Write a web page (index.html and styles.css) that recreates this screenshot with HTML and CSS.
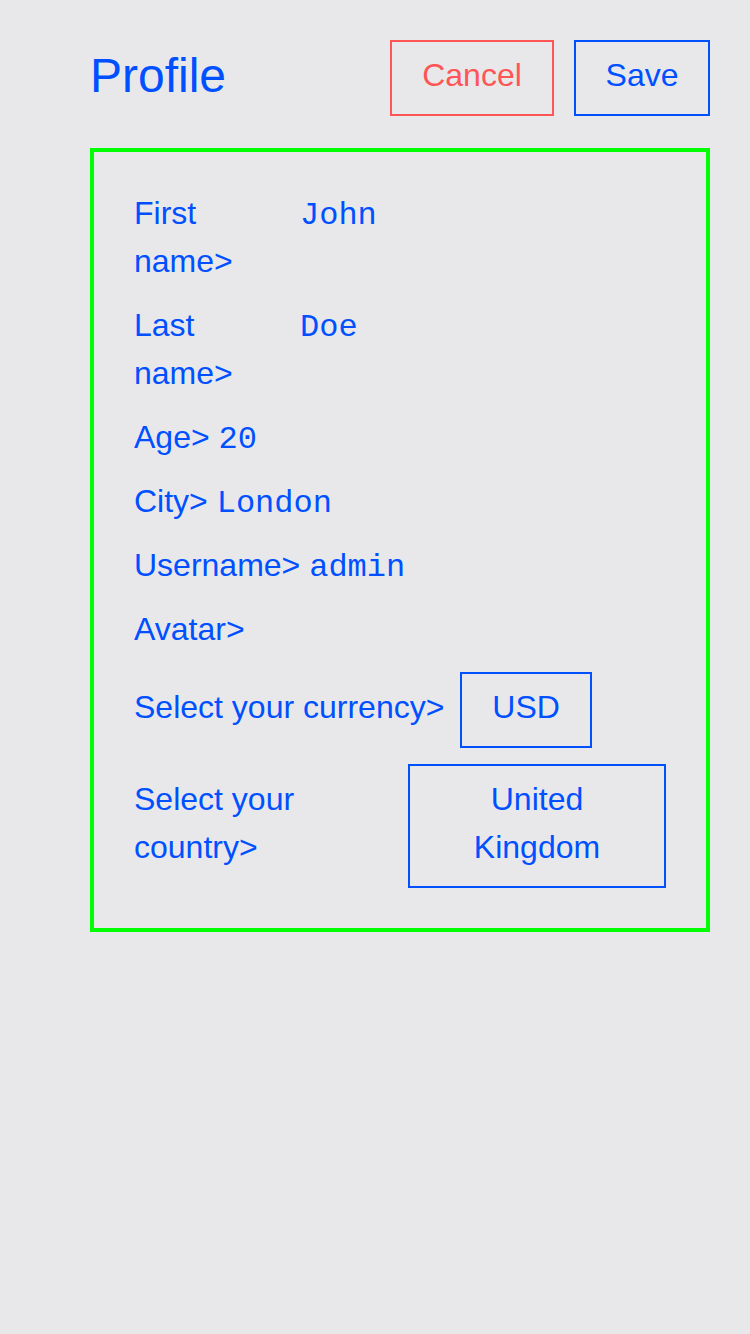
FILE: index.html
```html
<!DOCTYPE html>
<html lang="en">
<head>
<meta charset="utf-8">
<title>Profile</title>
<link rel="stylesheet" href="styles.css">
</head>
<body>
<div class="page">
  <header class="header">
    <h1 class="title">Profile</h1>
    <div class="actions">
      <button class="btn btn-cancel">Cancel</button>
      <button class="btn btn-save">Save</button>
    </div>
  </header>
  <section class="card">
    <div class="row row-split">
      <span class="label label-fixed">First name&gt;</span>
      <span class="value">John</span>
    </div>
    <div class="row row-split">
      <span class="label label-fixed">Last name&gt;</span>
      <span class="value">Doe</span>
    </div>
    <div class="row"><span class="label">Age&gt;</span> <span class="value">20</span></div>
    <div class="row"><span class="label">City&gt;</span> <span class="value">London</span></div>
    <div class="row"><span class="label">Username&gt;</span> <span class="value">admin</span></div>
    <div class="row"><span class="label">Avatar&gt;</span></div>
    <div class="row row-select row-currency">
      <span class="label">Select your currency&gt;</span>
      <div class="select">USD</div>
    </div>
    <div class="row row-select row-country">
      <span class="label label-half">Select your country&gt;</span>
      <div class="select select-half">United Kingdom</div>
    </div>
  </section>
</div>
</body>
</html>
```
FILE: styles.css
```css
html, body {
  margin: 0;
  padding: 0;
  background: #e8e8eb;
}
body {
  font-family: "Liberation Sans", Arial, sans-serif;
  color: #0050ff;
  width: 750px;
  min-height: 1334px;
}
.page {
  padding: 40px 40px 40px 90px;
}
.header {
  display: flex;
  align-items: center;
  justify-content: space-between;
  height: 76px;
}
.title {
  margin: 0;
  font-size: 48px;
  font-weight: normal;
  line-height: 56px;
  margin-top: -4px;
}
.actions {
  display: flex;
  gap: 20px;
}
.btn {
  box-sizing: border-box;
  font-family: "Liberation Sans", Arial, sans-serif;
  font-size: 32px;
  line-height: 48px;
  height: 76px;
  padding: 9px 0 15px;
  text-align: center;
  background: transparent;
  border: 2px solid #0050ff;
  color: #0050ff;
  margin: 0;
}
.btn-cancel {
  width: 164px;
  border-color: #ff5555;
  color: #ff5555;
}
.btn-save {
  width: 136px;
}
.card {
  margin-top: 32px;
  border: 4px solid #00ff00;
  padding: 37px 40px 40px;
  display: flex;
  flex-direction: column;
  gap: 16px;
}
.row {
  font-size: 32px;
  line-height: 48px;
}
.row-split {
  display: flex;
  align-items: baseline;
}
.label-fixed {
  flex: 0 0 166px;
}
.value {
  font-family: "Liberation Mono", "Courier New", monospace;
  line-height: 32px;
}
.row-select {
  display: flex;
  align-items: baseline;
  gap: 16px;
}
.row-currency {
  margin-top: 3px;
}
.select {
  box-sizing: border-box;
  border: 2px solid #0050ff;
  padding: 9px 30px 15px;
  text-align: center;
}
.label-half {
  flex: 1 1 auto;
}
.select-half {
  flex: 0 0 258px;
}
```
